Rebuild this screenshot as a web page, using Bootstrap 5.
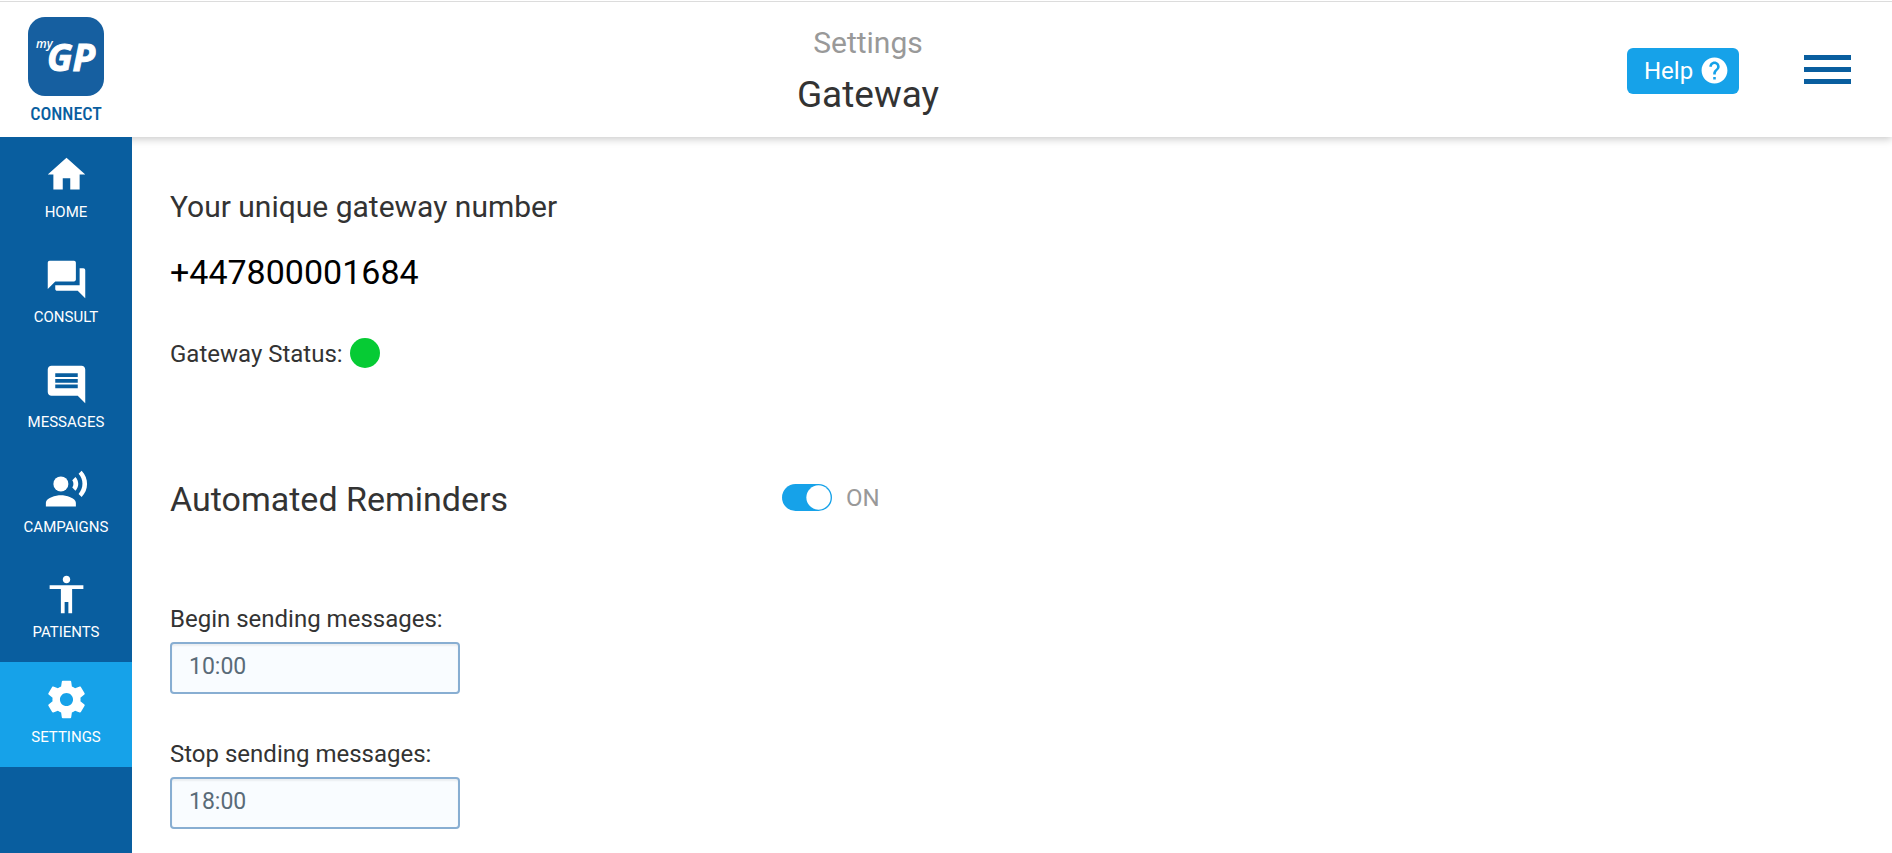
<!DOCTYPE html>
<html lang="en">
<head>
<meta charset="utf-8">
<meta name="viewport" content="width=device-width, initial-scale=1">
<title>Gateway settings</title>
<link href="https://cdn.jsdelivr.net/npm/bootstrap@5.3.0/dist/css/bootstrap.min.css" rel="stylesheet">
<style>
  :root { --brand: #095e9f; --accent: #16a2e9; --side: 132px; }
  body { font-family: Roboto, "Liberation Sans", sans-serif; color: #333; background: #fff; }
  .topbar { height: 137px; border-top: 1px solid #fff; background: #fff; box-shadow: 0 2px 8px rgba(0,0,0,.22), inset 0 1px #dcdcdc; z-index: 1; }
  .brand { width: var(--side); padding-top: 16px; color: var(--brand); }
  .brand-name { font: 500 18px/22px "Roboto Condensed", "Liberation Sans Narrow", Roboto, sans-serif; margin-top: 7px; }
  .titles { padding-top: 24px; }
  .section-name { font-size: 30px; line-height: 36px; color: #999; }
  .page-name { font-size: 37px; line-height: 46px; margin: 11px 0 0; font-weight: 400; }
  .tools { width: 288px; padding: 0 41px 0 23px; }
  .btn-help { height: 46px; margin-top: 3px; padding: 0 9px 0 17px; font-size: 24px; line-height: 30px; border-radius: 6px; background: var(--accent); color: #fff; border: 0; gap: 6px; }
  .btn-help:hover { background: var(--brand); color: #fff; }
  .btn-menu { width: 47px; height: 29px; color: var(--brand); }
  .shell { min-height: calc(100vh - 137px); }
  .sidebar { width: var(--side); background: var(--brand); z-index: 2; }
  .side-link { height: 105px; padding-top: 15px; color: #fff; font-size: 15px; line-height: 20px; gap: 5px; text-decoration: none; }
  .side-link:hover, .side-link.active { background: var(--accent); }
  .content { padding: 52px 38px 16px; }
  .lead-title { font-size: 30px; line-height: 36px; font-weight: 400; margin: 0 0 25px; }
  .big { font-size: 34px; line-height: 44px; font-weight: 400; margin: 0; }
  .body-text { font-size: 24px; line-height: 32px; }
  .status-row { margin: 44px 0 107px; }
  .status-dot { width: 30px; height: 30px; background: #06cb34; margin-left: 7px; }
  .reminder-row { margin-bottom: 82px; }
  .reminder-title { width: 612px; }
  .switch-group { margin-top: 5px; }
  .switch-label { color: #999; }
  .form-switch .form-check-input.toggle { width: 50px; height: 27px; margin: 2px 14px 0 0; float: none; border: 0; background-color: #aaa;
    background-image: url("data:image/svg+xml,%3csvg xmlns='http://www.w3.org/2000/svg' viewBox='-4 -4 8 8'%3e%3ccircle r='3.6' fill='%23fff'/%3e%3c/svg%3e"); }
  .form-switch .form-check-input.toggle:checked { background-color: var(--accent); }
  .time-field { margin-bottom: 44px; width: 290px; }
  .time-field:last-child { margin-bottom: 0; }
  .time-input { height: 52px; margin-top: 7px; padding: 0 17px 3px; border: 2px solid #88aed2; border-radius: 4px; background: #f9fcff; color: #5a6b78; font-size: 23px; line-height: 30px; box-shadow: inset 0 2px 2px rgba(0,0,0,.06); }
</style>
</head>
<body>
<header class="topbar d-flex position-relative">
  <a class="brand d-flex flex-column align-items-center text-decoration-none flex-shrink-0" href="#">
    <svg width="76" height="79" viewBox="0 0 76 79" role="img" aria-label="myGP">
      <rect width="76" height="79" rx="17" fill="#165fa0"/>
      <text x="8" y="31" font-family="Open Sans, sans-serif" font-size="12" font-style="italic" font-weight="600" fill="#fff">my</text>
      <text x="19" y="54" font-family="Open Sans, sans-serif" font-size="37" font-style="italic" font-weight="700" fill="#fff" stroke="#fff" stroke-width="1">GP</text>
    </svg>
    <span class="brand-name">CONNECT</span>
  </a>
  <div class="titles flex-grow-1 text-center">
    <div class="section-name">Settings</div>
    <h1 class="page-name">Gateway</h1>
  </div>
  <div class="tools d-flex align-items-center justify-content-between flex-shrink-0">
    <button type="button" class="btn btn-help d-flex align-items-center">Help
      <svg width="31" height="31" viewBox="0 0 24 24" fill="currentColor" aria-hidden="true"><path d="M12 2C6.48 2 2 6.48 2 12s4.480 10 10 10 10-4.480 10-10S17.520 2 12 2zm1 17h-2v-2h2v2zm2.070-7.750l-.9.920C13.450 12.900 13 13.500 13 15h-2v-.5c0-1.100.450-2.100 1.170-2.830l1.240-1.260c.370-.36.590-.86.590-1.410 0-1.100-.9-2-2-2s-2 .9-2 2H8c0-2.210 1.790-4 4-4s4 1.790 4 4c0 .880-.36 1.680-.93 2.250z"/></svg>
    </button>
    <button type="button" class="btn-menu btn p-0 border-0 rounded-0 d-flex" aria-label="Menu">
      <svg width="47" height="29" viewBox="0 0 47 29" fill="currentColor" aria-hidden="true"><path d="M0 0h47v5H0zM0 12h47v5H0zM0 24h47v5H0z"/></svg>
    </button>
  </div>
</header>
<div class="shell d-flex">
  <nav class="sidebar d-flex flex-column flex-shrink-0" aria-label="Main">
    <a class="side-link d-flex flex-column align-items-center" href="#"><svg width="45" height="45" viewBox="0 0 24 24" fill="currentColor" aria-hidden="true"><path d="M10 20v-6h4v6h5v-8h3L12 3 2 12h3v8z"/></svg>HOME</a>
    <a class="side-link d-flex flex-column align-items-center" href="#"><svg width="45" height="45" viewBox="0 0 24 24" fill="currentColor" aria-hidden="true"><path d="M21 6h-2v9H6v2c0 .55.45 1 1 1h11l4 4V7c0-.55-.45-1-1-1zm-4 6V3c0-.55-.45-1-1-1H3c-.55 0-1 .45-1 1v14l4-4h10c.55 0 1-.45 1-1z"/></svg>CONSULT</a>
    <a class="side-link d-flex flex-column align-items-center" href="#"><svg width="45" height="45" viewBox="0 0 24 24" fill="currentColor" aria-hidden="true"><path d="M21.990 4c0-1.100-.89-2-1.990-2H4c-1.100 0-2 .9-2 2v12c0 1.100.9 2 2 2h14l4 4-.01-18zM18 14H6v-2h12v2zm0-3H6V9h12v2zm0-3H6V6h12v2z"/></svg>MESSAGES</a>
    <a class="side-link d-flex flex-column align-items-center" href="#"><svg width="45" height="45" viewBox="0 0 24 24" fill="currentColor" aria-hidden="true"><circle cx="9" cy="9" r="4"/><path d="M9 15c-2.670 0-8 1.340-8 4v2h16v-2c0-2.660-5.330-4-8-4zm7.760-9.640l-1.680 1.690c.84 1.180.84 2.710 0 3.890l1.680 1.690c2.020-2.020 2.020-5.070 0-7.270zM20.070 2l-1.630 1.630c2.770 3.020 2.770 7.560 0 10.740L20.070 16c3.900-3.890 3.910-9.950 0-14z"/></svg>CAMPAIGNS</a>
    <a class="side-link d-flex flex-column align-items-center" href="#"><svg width="45" height="45" viewBox="0 0 24 24" fill="currentColor" aria-hidden="true"><path d="M12 2c1.100 0 2 .9 2 2s-.9 2-2 2-2-.9-2-2 .9-2 2-2zm9 7h-6v13h-2v-6h-2v6H9V9H3V7h18v2z"/></svg>PATIENTS</a>
    <a class="side-link active d-flex flex-column align-items-center" href="#" aria-current="page"><svg width="45" height="45" viewBox="0 0 24 24" fill="currentColor" aria-hidden="true"><path d="M19.430 12.980c.04-.32.070-.64.070-.98s-.03-.66-.07-.98l2.110-1.650c.19-.15.240-.42.120-.64l-2-3.460c-.12-.22-.39-.3-.61-.22l-2.490 1c-.52-.4-1.080-.73-1.690-.98l-.38-2.650C14.460 2.180 14.250 2 14 2h-4c-.25 0-.46.180-.49.420l-.38 2.650c-.61.250-1.170.590-1.690.98l-2.490-1c-.23-.09-.49 0-.61.220l-2 3.460c-.13.220-.07.490.12.640l2.110 1.650c-.04.320-.07.650-.07.980s.03.660.07.980l-2.110 1.650c-.19.150-.24.420-.12.640l2 3.460c.12.220.39.300.61.220l2.490-1c.52.400 1.080.730 1.690.98l.38 2.650c.03.240.24.420.49.420h4c.25 0 .46-.18.490-.42l.38-2.650c.61-.25 1.170-.59 1.690-.98l2.490 1c.23.090.49 0 .61-.22l2-3.460c.12-.22.070-.49-.12-.64l-2.110-1.650zM12 15.500c-1.930 0-3.500-1.570-3.500-3.500s1.570-3.500 3.500-3.500 3.500 1.570 3.500 3.500-1.570 3.500-3.500 3.500z"/></svg>SETTINGS</a>
  </nav>
  <main class="content flex-grow-1">
    <h2 class="lead-title">Your unique gateway number</h2>
    <p class="big text-black">+447800001684</p>
    <div class="status-row body-text d-flex align-items-start">Gateway Status:<span class="status-dot rounded-circle" role="img" aria-label="Online"></span></div>
    <div class="reminder-row d-flex align-items-start">
      <h2 class="big reminder-title">Automated Reminders</h2>
      <div class="switch-group form-check form-switch d-flex align-items-start p-0 mb-0 body-text">
        <input class="form-check-input toggle" type="checkbox" role="switch" id="reminders" checked>
        <label class="switch-label" for="reminders">ON</label>
      </div>
    </div>
    <div class="time-field">
      <label class="body-text d-block" for="begin">Begin sending messages:</label>
      <input class="form-control time-input" id="begin" type="text" value="10:00">
    </div>
    <div class="time-field">
      <label class="body-text d-block" for="stop">Stop sending messages:</label>
      <input class="form-control time-input" id="stop" type="text" value="18:00">
    </div>
  </main>
</div>
<script src="https://cdn.jsdelivr.net/npm/bootstrap@5.3.0/dist/js/bootstrap.bundle.min.js"></script>
</body>
</html>
